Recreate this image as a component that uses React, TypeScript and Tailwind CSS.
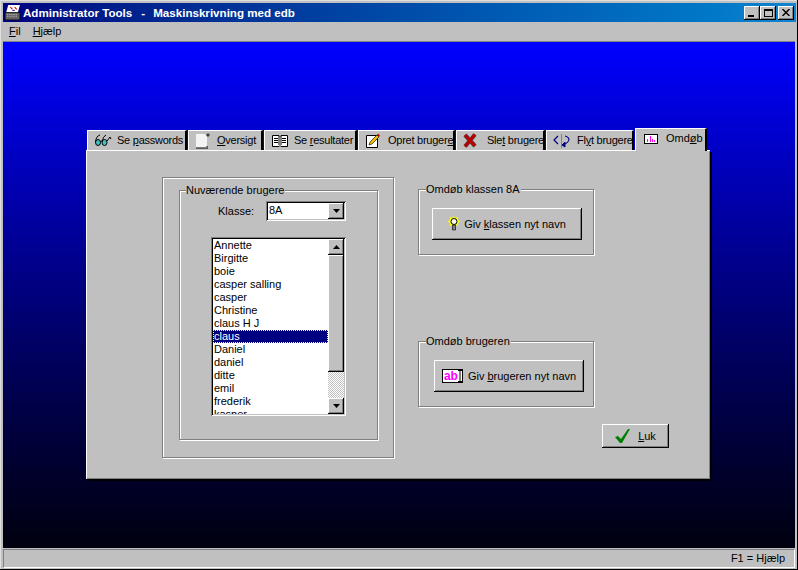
import React from 'react';

const raised = 'bg-[#c0c0c0] shadow-[inset_-1px_-1px_0_#000,inset_1px_1px_0_#fff,inset_-2px_-2px_0_#808080]';
const sunken = 'shadow-[inset_1px_1px_0_#808080,inset_-1px_-1px_0_#fff,inset_2px_2px_0_#000,inset_-2px_-2px_0_#c0c0c0]';
const etched = 'border border-[#808080] shadow-[inset_1px_1px_0_#fff,1px_1px_0_#fff]';

const names = ['Annette', 'Birgitte', 'boie', 'casper salling', 'casper', 'Christine', 'claus H J', 'claus', 'Daniel', 'daniel', 'ditte', 'emil', 'frederik', 'kasper'];

const Glasses = () => (
    <svg width="18" height="14" viewBox="0 0 18 14" fill="none" stroke="#000" strokeWidth="1">
        <ellipse cx="4" cy="8.5" rx="2.5" ry="3" fill="#40c0c0" />
        <ellipse cx="10.5" cy="8.5" rx="2.5" ry="3" fill="#40c0c0" />
        <path d="M6.5 7.5 Q7 6 8 7.5 M1.5 8 Q2 2 6 1 M8 8 Q9 2 12 1 M13 7 L16 3 L17 5" />
    </svg>
);

const Page = () => (
    <svg width="16" height="18" viewBox="0 0 16 18">
        <path d="M1 2 H10 L12 5 V16 H1 Z" fill="#f4f4f4" />
        <path d="M1 16 H11 M12 14 V17" stroke="#000" fill="none" />
        <path d="M13 1 L15 3 L13 5 L11 3 Z" fill="#404040" />
    </svg>
);

const Book = () => (
    <svg width="18" height="14" viewBox="0 0 18 14" fill="#fff" stroke="#000">
        <path d="M1.5 1.5 H8 L9 2.5 L10 1.5 H16.5 V12.5 H10 L9 11.5 L8 12.5 H1.5 Z" />
        <path d="M8 2 V11 M10 2 V11 M3 4.5 H7 M3 6.5 H7 M3 8.5 H7 M11 4.5 H15 M11 6.5 H15 M11 8.5 H15" />
    </svg>
);

const Pencil = () => (
    <svg width="16" height="16" viewBox="0 0 16 16">
        <path d="M1.5 2.5 H12.5 V14.5 H1.5 Z" fill="#fff" stroke="#000" />
        <path d="M4 12 L5 9 L12 2 L14 4 L7 11 Z" fill="#e8c000" stroke="#000" strokeWidth="0.6" />
        <path d="M12 2 L13 0.5 L15 2.5 L14 4 Z" fill="#c00000" />
    </svg>
);

const RedX = () => (
    <svg width="14" height="15" viewBox="0 0 14 15" fill="none">
        <path d="M2 2 L12 13 M12 1.5 L2 13.5" stroke="#505050" strokeWidth="4.2" />
        <path d="M2 2 L12 13 M12 1.5 L2 13.5" stroke="#b80000" strokeWidth="3" />
    </svg>
);

const Move = () => (
    <svg width="18" height="14" viewBox="0 0 18 14" fill="none">
        <path d="M5 2 L1 6 L5 10 M12 2 Q16 3 16 6" stroke="#000080" strokeWidth="1.2" />
        <path d="M8.5 0 V14" stroke="#808080" />
        <path d="M16 6 Q15 9 12 10 V8 L9 11 L12 13 V11" fill="#000080" stroke="#000080" />
    </svg>
);

const Rename = () => (
    <svg width="14" height="10" viewBox="0 0 14 10">
        <rect x="0.5" y="0.5" width="13" height="9" fill="#fff" stroke="#000" />
        <path d="M3.5 8 V5 M6.5 8 V2 M8.5 8 V5 M10.5 8 V6" stroke="#ff00ff" strokeWidth="1" />
    </svg>
);

const Bulb = () => (
    <svg width="12" height="16" viewBox="0 0 12 16">
        <path d="M6 0 L7.5 2 L10 1 L10 3.5 L12 5.5 L10 7.5 L10 10 L7.5 9 L6 11 L4.5 9 L2 10 L2 7.5 L0 5.5 L2 3.5 L2 1 L4.5 2 Z" fill="#ffff00" />
        <circle cx="6" cy="5.5" r="3" fill="#fffff0" stroke="#000" />
        <path d="M4.5 9 H7.5 V14 H4.5 Z" fill="#808080" stroke="#000" strokeWidth="0.6" />
    </svg>
);

const Check = () => (
    <svg width="16" height="15" viewBox="0 0 16 15">
        <path d="M0 8 L3 7 L6 10 L13 0 L15 0 L7 14 L5 14 Z" fill="#008000" />
    </svg>
);

const Arrow = ({ up }: { up?: boolean }) => (
    <svg width="7" height="4" viewBox="0 0 7 4" className={up ? '' : 'rotate-180'}>
        <path d="M3.5 0 L7 4 H0 Z" fill="#000" />
    </svg>
);

const tabs = [
    { w: 'w-[100px]', gap: 'gap-[5px]', icon: <Glasses />, before: 'Se ', key: 'p', after: 'asswords' },
    { w: 'w-[75px]', gap: 'gap-[6px]', icon: <Page />, before: '', key: 'O', after: 'versigt' },
    { w: 'w-[93px]', gap: 'gap-[5px]', icon: <Book />, before: 'Se ', key: 'r', after: 'esultater' },
    { w: 'w-[97px]', gap: 'gap-[7px]', icon: <Pencil />, before: 'Opret bruger', key: 'e', after: '' },
    { w: 'w-[89px]', gap: 'gap-[10px]', icon: <RedX />, before: 'Sle', key: 't', after: ' brugere' },
    { w: 'w-[88px]', gap: 'gap-[6px]', icon: <Move />, before: 'Fl', key: 'y', after: 't brugere' },
];

const GroupTitle = ({ children }: { children: React.ReactNode }) => (
    <div className="-mt-[7px] ml-[7px] w-fit bg-[#c0c0c0] pr-[1px] leading-[13px]">{children}</div>
);

export default function App() {
    return (
        <div className="w-[798px] h-[570px] flex flex-col bg-[#c0c0c0] p-[2px] shadow-[inset_-1px_-1px_0_#000,inset_1px_1px_0_#dfdfdf] text-[11px] text-black overflow-hidden" style={{ fontFamily: '"Liberation Sans", Arial, sans-serif' }}>
            {/* title bar */}
            <div className="h-[19px] ml-[1px] mt-[1px] flex items-center bg-gradient-to-r from-[#000080] to-[#1084d0] pl-[1px] pr-[2px]">
                <svg width="17" height="17" viewBox="0 0 16 16" className="shrink-0">
                    <path d="M4 1 H15 L13 8 H2 Z" fill="#fff" />
                    <path d="M6 3 L8 5 M10 3 L12 5" stroke="#d00000" />
                    <path d="M8 6 H10" stroke="#0000c0" />
                    <rect x="1" y="8" width="14" height="7" fill="#606060" stroke="#000" strokeWidth="0.6" />
                    <path d="M3 10 H13 M3 12 H13" stroke="#c0c0c0" strokeDasharray="1 1" />
                </svg>
                <div className="ml-[2px] flex whitespace-pre font-bold text-white text-[11.6px]">
                    <span>Administrator Tools</span>
                    <span className="ml-[9px]">-</span>
                    <span className="ml-[8px]">Maskinskrivning med edb</span>
                </div>
                <div className="ml-auto flex items-center">
                    <button className={`w-[16px] h-[14px] flex items-end pl-[4px] pb-[3px] ${raised}`}>
                        <span className="block w-[6px] h-[2px] bg-black" />
                    </button>
                    <button className={`w-[16px] h-[14px] flex items-center justify-center ${raised}`}>
                        <span className="block w-[9px] h-[8px] border border-black border-t-2" />
                    </button>
                    <button className={`ml-[2px] w-[16px] h-[14px] flex items-center justify-center ${raised}`}>
                        <svg width="8" height="7" viewBox="0 0 8 7"><path d="M0.5 0 L7.5 7 M7.5 0 L0.5 7" stroke="#000" strokeWidth="1.4" /></svg>
                    </button>
                </div>
            </div>

            {/* menu */}
            <div className="h-[19px] ml-[1px] flex items-center gap-[12px] pl-[6px] leading-none">
                <span><span className="underline">F</span>il</span>
                <span><span className="underline">H</span>jælp</span>
            </div>

            {/* client area */}
            <div className="h-[507px] ml-[1px] mr-[1px] border-t border-[#808080] bg-gradient-to-b from-[#0000ff] to-[#000010] pt-[85px] pl-[83px]">
                <div className="w-[624px]">
                    {/* tabs */}
                    <div className="h-[23px] flex items-end pl-[1px] relative z-10">
                        {tabs.map((t) => (
                            <div key={t.before + t.key} className={`${t.w} h-[20px] mr-[1px] flex items-center ${t.gap} pl-[6px] whitespace-pre bg-[#c0c0c0] border-t border-l border-white border-r-2 border-r-black leading-none tracking-[-0.25px]`}>
                                <span className="shrink-0 flex">{t.icon}</span>
                                <span>{t.before}<span className="underline">{t.key}</span>{t.after}</span>
                            </div>
                        ))}
                        <div className="w-[72px] h-[23px] -mb-[1px] flex items-center gap-[8px] pl-[8px] pb-[3px] bg-[#c0c0c0] border-t border-l border-white border-r-2 border-r-black leading-none">
                            <Rename />
                            <span>Omd<span className="underline">ø</span>b</span>
                        </div>
                    </div>

                    {/* tab panel */}
                    <div className="h-[329px] flex bg-[#c0c0c0] pl-[76px] pt-[27px] shadow-[inset_1px_1px_0_#fff,inset_-1px_-1px_0_#808080,2px_2px_0_#000]">
                        <div className={`w-[232px] h-[281px] pl-[16px] pt-[12px] ${etched}`}>
                            <div className={`w-[199px] h-[250px] pl-[31px] ${etched}`}>
                                <div className="-ml-[32px]"><GroupTitle>Nuværende brugere</GroupTitle></div>
                                <div className="flex items-center h-[20px] mt-[4px] ml-[7px]">
                                    <span className="w-[48px]">Klasse:</span>
                                    <div className={`w-[80px] h-[20px] bg-white flex items-center justify-between pl-[3px] pr-[2px] ${sunken}`}>
                                        <span className="-mt-[1px]">8A</span>
                                        <div className={`w-[16px] h-[16px] flex items-center justify-center ${raised}`}><Arrow /></div>
                                    </div>
                                </div>

                                <div className={`mt-[16px] w-[135px] h-[179px] flex bg-white p-[2px] overflow-hidden ${sunken}`}>
                                    <div className="w-[116px] h-[175px] overflow-hidden">
                                        {names.map((n) => (
                                            <div key={n} className={`h-[13px] leading-[13px] pl-[1px] ${n === 'claus' ? 'bg-[#000080] text-white outline-1 -outline-offset-1 outline-dotted outline-[#ffff80]' : ''}`}>{n}</div>
                                        ))}
                                    </div>
                                    <div className="w-[16px] h-[175px] flex flex-col bg-[repeating-conic-gradient(#c0c0c0_0_25%,#fff_0_50%)] bg-[length:2px_2px]">
                                        <div className={`h-[16px] shrink-0 flex items-center justify-center ${raised}`}><Arrow up /></div>
                                        <div className={`h-[117px] shrink-0 ${raised}`} />
                                        <div className={`h-[16px] shrink-0 mt-auto flex items-center justify-center ${raised}`}><Arrow /></div>
                                    </div>
                                </div>
                            </div>
                        </div>

                        <div className="ml-[24px] w-[252px] pt-[12px]">
                            <div className={`w-[176px] h-[66px] ${etched}`}>
                                <GroupTitle>Omdøb klassen 8A</GroupTitle>
                                <button className={`mt-[12px] ml-[13px] w-[150px] h-[32px] flex items-center justify-center gap-[4px] ${raised}`}>
                                    <Bulb />
                                    <span>Giv <span className="underline">k</span>lassen nyt navn</span>
                                </button>
                            </div>
                            <div className={`mt-[86px] w-[176px] h-[66px] ${etched}`}>
                                <GroupTitle>Omdøb brugeren</GroupTitle>
                                <button className={`mt-[12px] ml-[15px] w-[150px] h-[32px] flex items-center justify-center gap-[5px] ${raised}`}>
                                    <span className="w-[21px] h-[14px] flex items-center bg-white border border-black text-[#ff00ff] font-bold text-[12px] leading-none pl-[1px]">ab
                                        <svg width="4" height="12" viewBox="0 0 4 12" className="shrink-0"><path d="M0 0.5 H4 M2 0.5 V11.5 M0 11.5 H4" stroke="#000" /></svg>
                                    </span>
                                    <span>Giv <span className="underline">b</span>rugeren nyt navn</span>
                                </button>
                            </div>
                            <button className={`mt-[17px] ml-[184px] w-[67px] h-[24px] flex items-center justify-center gap-[7px] ${raised}`}>
                                <Check />
                                <span><span className="underline">L</span>uk</span>
                            </button>
                        </div>
                    </div>
                </div>
            </div>

            {/* status bar */}
            <div className="h-[19px] ml-[1px] mr-[1px] mt-[1px] flex items-center justify-end pr-[9px] border border-[#808080] border-r-white border-b-white leading-none">
                F1 = Hjælp
            </div>
        </div>
    );
}
